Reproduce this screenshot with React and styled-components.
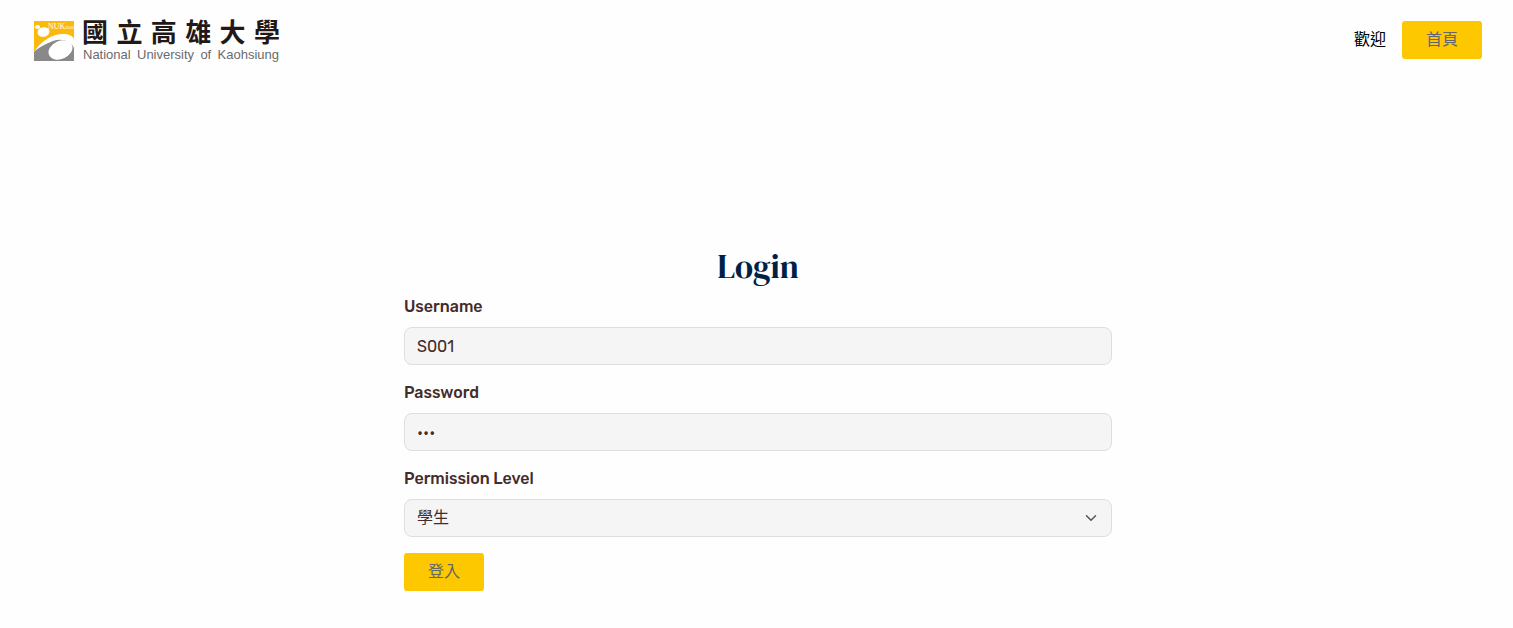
import React from "react";
import styled, { createGlobalStyle } from "styled-components";

const GlobalStyle = createGlobalStyle`
  *, *::before, *::after { box-sizing: border-box; }
  body {
    margin: 0;
    background: #fefefe;
    color: #000;
    font-family: Rubik, Inter, "Noto Sans CJK TC", sans-serif;
    font-size: 16px;
    line-height: 24px;
  }
`;

const Header = styled.header`
  display: flex;
  align-items: center;
  justify-content: space-between;
  min-height: 80px;
  padding: 0 31px 0 34px;
`;

const Brand = styled.a`
  display: flex;
  align-items: flex-end;
  gap: 8px;
  color: #231815;
  text-decoration: none;
`;

const Emblem = styled.svg`
  display: block;
  width: 40px;
  height: 40px;
  margin-bottom: 2px;
`;

const BrandText = styled.span`
  display: flex;
  flex-direction: column;
  gap: 2px;
  width: 198px;
`;

const BrandName = styled.span`
  display: flex;
  justify-content: space-between;
  font-family: "Noto Sans CJK TC", sans-serif;
  font-size: 26px;
  font-weight: 700;
  line-height: 28px;
`;

const BrandSubtitle = styled.span`
  display: flex;
  justify-content: space-between;
  padding: 0 1px 0 1px;
  color: #6b6b6b;
  font-family: "Liberation Sans Narrow", "Liberation Sans", sans-serif;
  font-size: 13px;
  line-height: 16px;
  white-space: nowrap;
`;

const Nav = styled.nav`
  display: flex;
  align-items: center;
  gap: 16px;
`;

const Button = styled.button`
  min-height: 38px;
  padding: 0 24px;
  border: 0;
  border-radius: 3px;
  background: #fdc800;
  color: #666;
  font: inherit;
  cursor: pointer;
`;

const Main = styled.main`
  padding: 167px 31px 36px 34px;
`;

const Form = styled.form`
  display: flex;
  flex-direction: column;
  align-items: flex-start;
  gap: 16px;
  max-width: 708px;
  margin: 0 auto;
`;

const Title = styled.h1`
  margin: 0 0 8px;
  color: #002147;
  font-family: "DM Serif Display", "Liberation Serif", serif;
  font-size: 33px;
  font-weight: 400;
  line-height: 40px;
  text-align: center;
`;

const Field = styled.div`
  display: flex;
  flex-direction: column;
  gap: 8px;
  width: 100%;
`;

const Label = styled.label`
  color: #432c2c;
  font-weight: 500;
`;

const Control = styled.input`
  width: 100%;
  height: 38px;
  padding: 0 12px;
  border: 1px solid #dedede;
  border-radius: 8px;
  background: #f5f5f5;
  color: #432c2c;
  font: inherit;
  appearance: none;
`;

const SelectBox = styled.div`
  position: relative;
`;

const Chevron = styled.svg`
  position: absolute;
  top: 13px;
  right: 15px;
  width: 12px;
  height: 12px;
  pointer-events: none;
`;

function Logo() {
  return (
    <Brand href="#" aria-label="國立高雄大學 National University of Kaohsiung">
      <Emblem viewBox="0 0 40 40" aria-hidden="true">
        <rect width="40" height="40" fill="#fcb90c" />
        <path d="M0 40V31C6 21 16 16 27 16C34 16 38 19 40 22V40Z" fill="#898989" />
        <path
          d="M0 31C7 20 18 13 29 13C35 13 39 15 40 18V27C37 20 28 17 19 20C11 23 4 27 0 31Z"
          fill="#fff"
        />
        <ellipse cx="26.500" cy="29" rx="12.500" ry="9" transform="rotate(-24 26.500 29)" fill="#fff" />
        <path d="M22 40C30 39 37 34 40 27V40Z" fill="#898989" />
        <ellipse cx="9.500" cy="11" rx="6" ry="4.800" transform="rotate(-12 9.500 11)" fill="#fff" />
        <ellipse cx="3.500" cy="6" rx="2.600" ry="2.100" fill="#fff" />
        <text x="14" y="8" fill="#fff" fontFamily="Liberation Serif, serif" fontSize="8">NUK</text>
        <text x="31" y="8" fill="#fff" fontFamily="Liberation Sans, sans-serif" fontSize="4">2000</text>
      </Emblem>
      <BrandText>
        <BrandName>
          {Array.from("國立高雄大學").map((character) => (
            <span key={character}>{character}</span>
          ))}
        </BrandName>
        <BrandSubtitle>
          {["National", "University", "of", "Kaohsiung"].map((word) => (
            <span key={word}>{word}</span>
          ))}
        </BrandSubtitle>
      </BrandText>
    </Brand>
  );
}

export default function App() {
  return (
    <>
      <GlobalStyle />
      <Header>
        <Logo />
        <Nav>
          <span>歡迎</span>
          <Button type="button">首頁</Button>
        </Nav>
      </Header>
      <Main>
        <Title>Login</Title>
        <Form onSubmit={(event) => event.preventDefault()}>
          <Field>
            <Label htmlFor="username">Username</Label>
            <Control id="username" type="text" defaultValue="S001" />
          </Field>
          <Field>
            <Label htmlFor="password">Password</Label>
            <Control id="password" type="password" defaultValue="123" />
          </Field>
          <Field>
            <Label htmlFor="permission">Permission Level</Label>
            <SelectBox>
              <Control as="select" id="permission" defaultValue="student">
                <option value="student">學生</option>
              </Control>
              <Chevron viewBox="0 0 12 12" aria-hidden="true">
                <path
                  d="M1.500 3.700L6 8.200L10.500 3.700"
                  fill="none"
                  stroke="#555"
                  strokeWidth="1.500"
                  strokeLinecap="round"
                  strokeLinejoin="round"
                />
              </Chevron>
            </SelectBox>
          </Field>
          <Button type="submit">登入</Button>
        </Form>
      </Main>
    </>
  );
}
